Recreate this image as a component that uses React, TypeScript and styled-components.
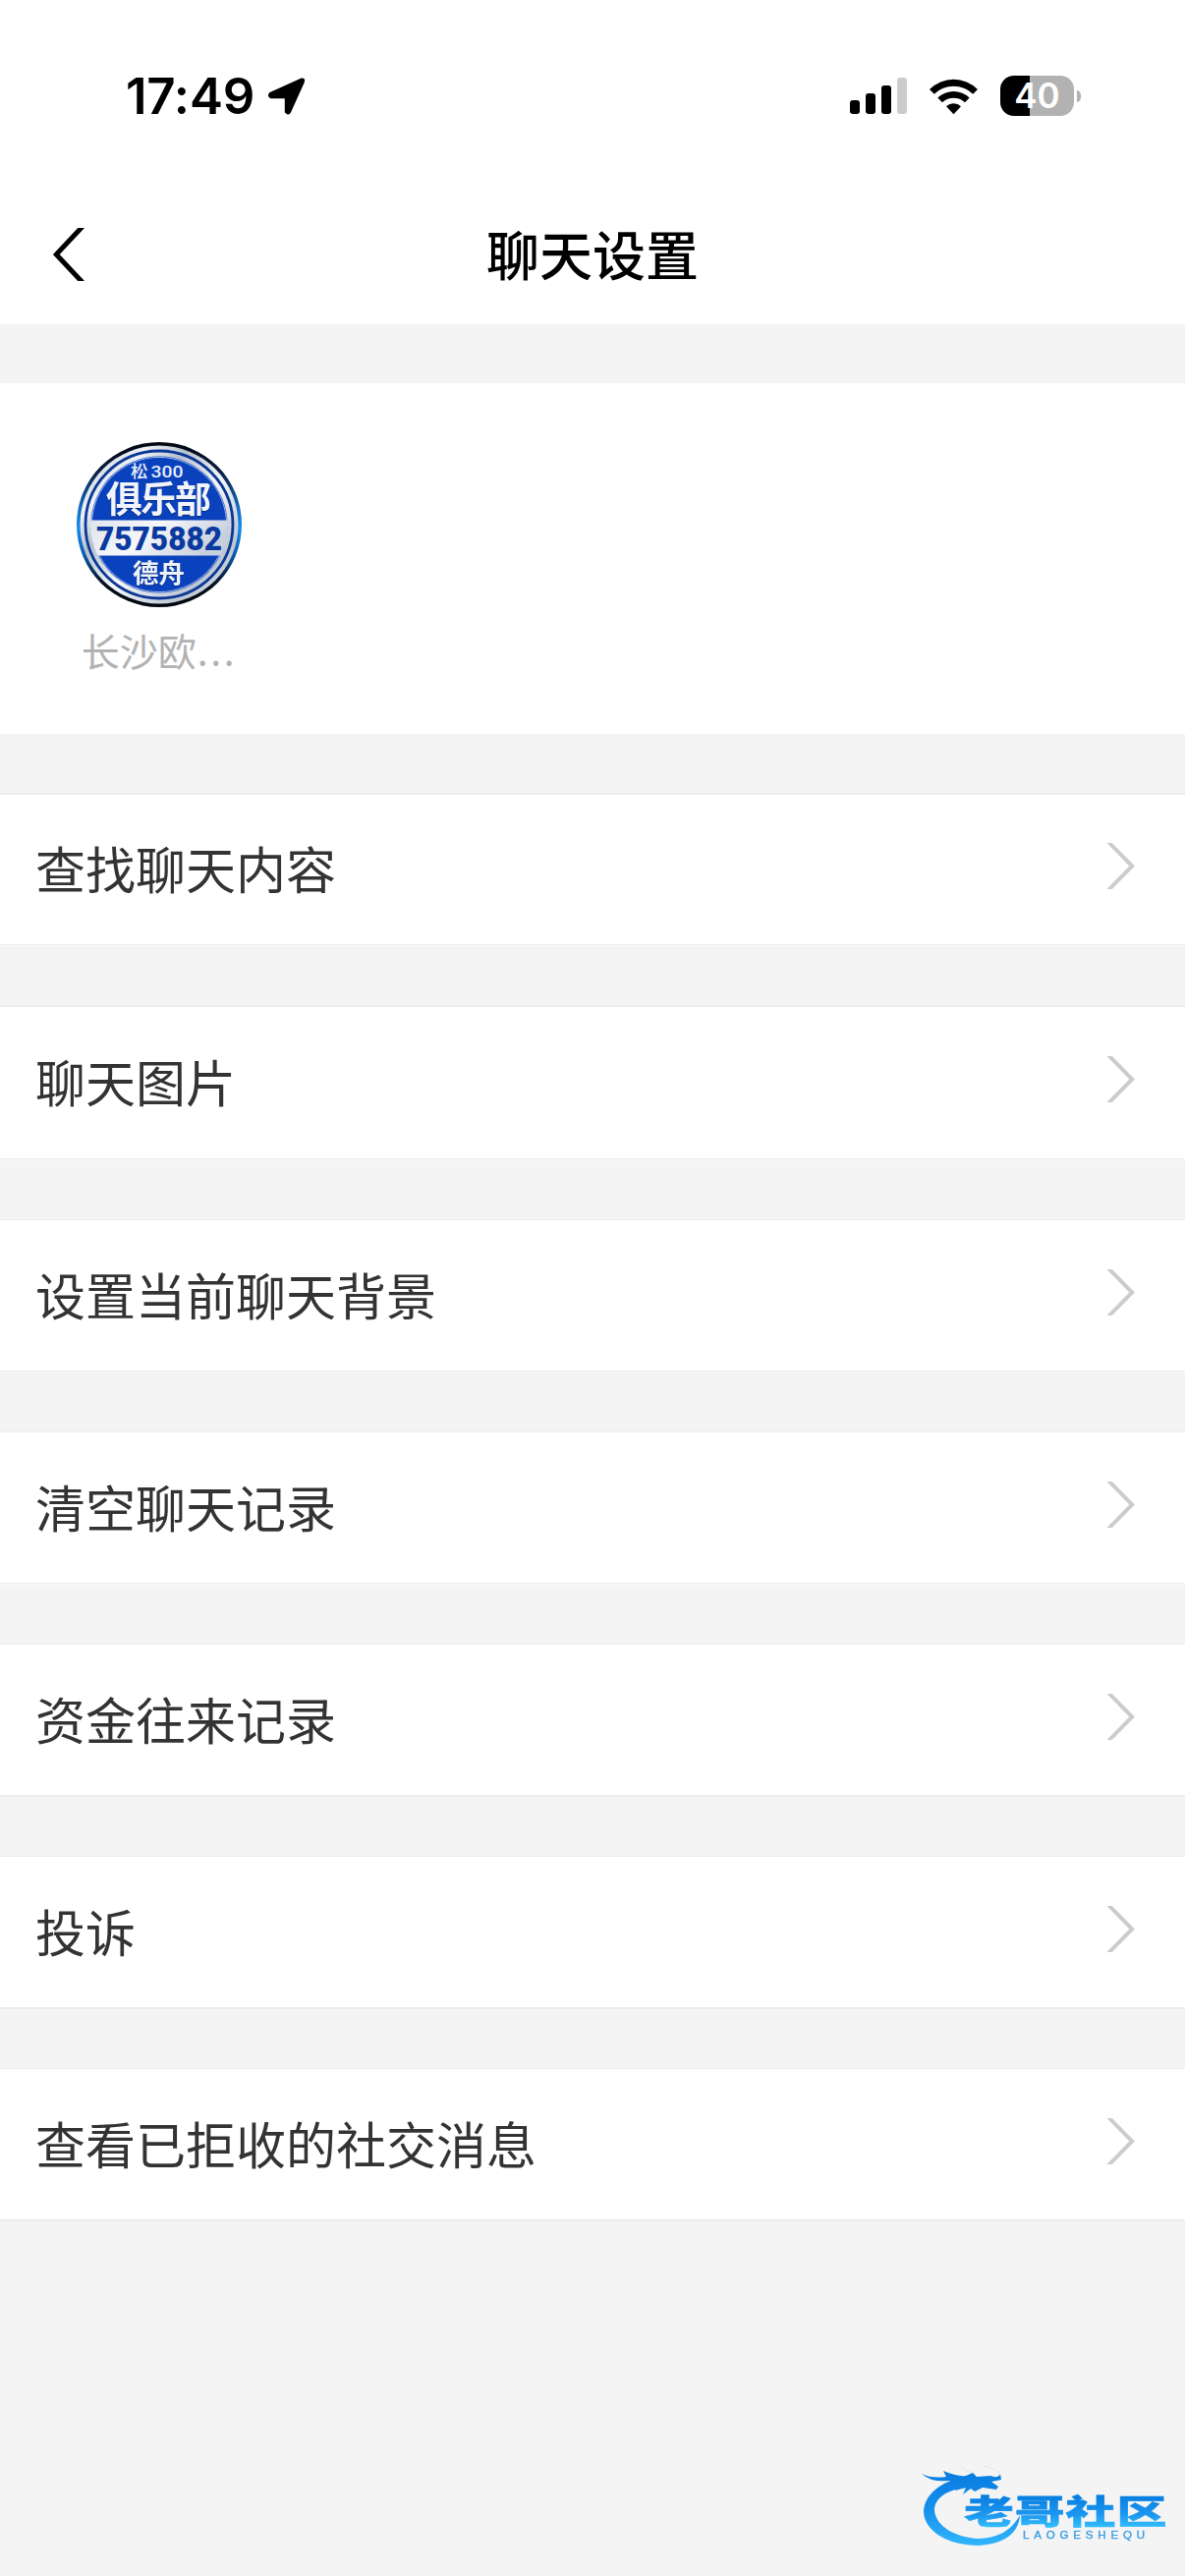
import React, { FC } from 'react';
import styled, { createGlobalStyle } from 'styled-components';

const GlobalStyle = createGlobalStyle`
  html,
  body {
    margin: 0;
    background: #f4f4f4;
  }
`;

const Screen = styled.div`
  position: relative;
  display: flex;
  flex-direction: column;
  width: 1206px;
  height: 2622px;
  overflow: hidden;
  background: #f4f4f4;
  font-family: 'Noto Sans CJK SC', sans-serif;
`;

const StatusBar = styled.div`
  display: flex;
  align-items: center;
  box-sizing: border-box;
  height: 195px;
  padding: 0 106px 0 128px;
  background: #fff;
`;

const Time = styled.span`
  width: 144px;
  font-family: Inter, sans-serif;
  font-size: 51px;
  font-weight: 600;
  letter-spacing: -0.2px;
  line-height: 60px;
`;

const StatusIcons = styled.div`
  display: flex;
  align-items: center;
  margin-left: auto;
`;

const SignalIcon = styled.svg`
  margin-right: 22px;
`;

const WifiSvg = styled.svg`
  margin-right: 22px;
`;

const Battery = styled.div`
  display: flex;
  align-items: center;
  justify-content: center;
  width: 75px;
  height: 41px;
  border-radius: 14px;
  background: linear-gradient(to right, #000 40%, #b2b2b2 40%);
  color: #fff;
  font-family: Inter, sans-serif;
  font-size: 35px;
  font-weight: 600;
  line-height: 41px;
`;

const BatteryCap = styled.div`
  width: 4px;
  height: 12px;
  margin-left: 3px;
  border-radius: 0 5px 5px 0 / 0 6px 6px 0;
  background: #b2b2b2;
`;

const NavBar = styled.header`
  display: grid;
  grid-template-columns: 100px 1fr 100px;
  align-items: center;
  height: 135px;
  background: #fff;
`;

const BackIcon = styled.svg`
  margin: -8px 0 0 53px;
`;

const Title = styled.h1`
  margin: -9px 0 0;
  color: #000;
  font-size: 54px;
  font-weight: 500;
  line-height: 80px;
  text-align: center;
`;

const Sections = styled.main`
  display: flex;
  flex-direction: column;
  gap: 60px;
  padding-top: 60px;
`;

const Members = styled.section`
  box-sizing: border-box;
  height: 357px;
  padding: 60px 78px 0;
  background: #fff;
`;

const Member = styled.div`
  display: flex;
  flex-direction: column;
  align-items: center;
  width: 168px;
`;

const MemberName = styled.span`
  margin-top: 14px;
  color: #b2b2b2;
  font-size: 39px;
  font-weight: 400;
  line-height: 58px;
`;

const Dots = styled.span`
  margin-left: 1px;
  letter-spacing: 2.6px;
`;

type RowProps = { $top: number; $bottom: number; $tall?: boolean };

const Row = styled.div<RowProps>`
  display: flex;
  align-items: center;
  justify-content: space-between;
  box-sizing: border-box;
  height: ${({ $tall }) => ($tall ? 158 : 156)}px;
  padding: 0 51px 0 36px;
  background: #fff;
  box-shadow:
    inset 0 ${({ $top }) => $top}px #ececec,
    inset 0 -${({ $bottom }) => ($bottom === 2 ? 0 : 1)}px #fafafa,
    inset 0 -2px #ececec;
`;

const RowLabel = styled.span`
  margin-top: -4px;
  color: #333;
  font-size: 51px;
  font-weight: 400;
  line-height: 76px;
`;

const Chevron = styled.svg`
  margin-top: -7px;
`;

const Watermark = styled.svg`
  position: absolute;
  left: 930px;
  top: 2500px;
  filter: blur(0.6px);
`;

const Embossed = styled.text`
  filter: drop-shadow(0.5px 1.5px 0.6px #06287d);
`;

const rows = [
  { label: '查找聊天内容', top: 2, bottom: 1 },
  { label: '聊天图片', top: 2, bottom: 1, tall: true },
  { label: '设置当前聊天背景', top: 1, bottom: 1 },
  { label: '清空聊天记录', top: 1, bottom: 1 },
  { label: '资金往来记录', top: 1, bottom: 2 },
  { label: '投诉', top: 1, bottom: 2 },
  { label: '查看已拒收的社交消息', top: 1, bottom: 2 },
];

const LocationIcon: FC = () => (
  <svg width="40" height="40" viewBox="0 0 40 40">
    <path
      d="M3 17 L34 2.8 Q38.2 1.3 36.8 5.6 L22.8 36.5 Q20.8 38.6 18.8 36 V21.2 H3.6 Q0.7 19.4 3 17 Z"
      stroke="#000"
      strokeWidth="2"
      strokeLinejoin="round"
    />
  </svg>
);

const WifiIcon: FC = () => (
  <WifiSvg width="51" height="38" viewBox="0 0 51 38">
    <path d="M1 12 A34.5 34.5 0 0 1 50 12 L45.2 16.7 A28.5 28.5 0 0 0 5.8 16.7 Z" />
    <path d="M9.3 20.5 A23.5 23.5 0 0 1 41.7 20.5 L37 25.2 A17 17 0 0 0 14 25.2 Z" />
    <path d="M18 29.3 A11 11 0 0 1 33 29.3 L25.5 37.2 Z" />
  </WifiSvg>
);

const Avatar: FC = () => (
  <svg width="168" height="168" viewBox="0 0 168 168" fontFamily="'Noto Sans CJK SC', sans-serif">
    <defs>
      <linearGradient id="rim" x1="0" y1="0" x2="0" y2="1">
        <stop offset="0" stopColor="#02060f" />
        <stop offset="0.17" stopColor="#0b1c3c" />
        <stop offset="0.38" stopColor="#1166b8" />
        <stop offset="0.52" stopColor="#128cee" />
        <stop offset="0.68" stopColor="#0b5bb0" />
        <stop offset="0.86" stopColor="#04101f" />
        <stop offset="1" stopColor="#02060d" />
      </linearGradient>
      <linearGradient id="silver" x1="0" y1="0" x2="1" y2="1">
        <stop offset="0" stopColor="#b6c1d0" />
        <stop offset="0.22" stopColor="#eff2f7" />
        <stop offset="0.35" stopColor="#b5c0ce" />
        <stop offset="0.55" stopColor="#f6f8fb" />
        <stop offset="0.8" stopColor="#bcc6d3" />
        <stop offset="1" stopColor="#e9ecf1" />
      </linearGradient>
      <linearGradient id="band" x1="0" y1="0" x2="1" y2="0.3">
        <stop offset="0" stopColor="#dfe4ec" />
        <stop offset="0.5" stopColor="#f5f7fa" />
        <stop offset="1" stopColor="#c8d0dd" />
      </linearGradient>
      <clipPath id="disc">
        <circle cx="84" cy="84" r="70" />
      </clipPath>
    </defs>
    <circle cx="84" cy="84" r="84" fill="url(#rim)" />
    <circle cx="84" cy="84" r="80.5" fill="url(#silver)" />
    <circle cx="84" cy="84" r="75" fill="none" stroke="#0b3795" strokeWidth="2.8" />
    <circle cx="84" cy="84" r="69.5" fill="#0a41bd" />
    <circle cx="84" cy="84" r="68.6" fill="none" stroke="#c9d6ec" strokeWidth="0.8" />
    <rect x="12" y="79.5" width="144" height="36" fill="url(#band)" clipPath="url(#disc)" />
    <text x="55" y="36" fontSize="17.5" fontWeight="500" fill="#e8eefb">松</text>
    <text
      x="75.5"
      y="36"
      fontSize="17"
      fontWeight="500"
      fontFamily="Roboto, sans-serif"
      textLength="33"
      lengthAdjust="spacingAndGlyphs"
      fill="#e8eefb"
    >
      300
    </text>
    <Embossed x="30" y="72" fontSize="37" fontWeight="700" textLength="107" fill="#f1f4fa">俱乐部</Embossed>
    <text
      x="20"
      y="109.5"
      fontSize="33"
      fontWeight="900"
      fontFamily="Roboto, sans-serif"
      textLength="128"
      lengthAdjust="spacingAndGlyphs"
      fill="#0a3aa0"
    >
      7575882
    </text>
    <Embossed x="57" y="142.5" fontSize="26.5" fontWeight="700" textLength="53" fill="#eef2f9">德舟</Embossed>
  </svg>
);

const CommunityLogo: FC = () => (
  <Watermark width="270" height="100" viewBox="0 0 270 100">
    <defs>
      <linearGradient id="ring" gradientUnits="userSpaceOnUse" x1="0" y1="18" x2="0" y2="90">
        <stop offset="0" stopColor="#0a7ee2" />
        <stop offset="0.5" stopColor="#1590ec" />
        <stop offset="1" stopColor="#31b4fb" />
      </linearGradient>
      <linearGradient id="word" gradientUnits="userSpaceOnUse" x1="0" y1="-30" x2="0" y2="3">
        <stop offset="0" stopColor="#0a7fe2" />
        <stop offset="0.6" stopColor="#1c97f0" />
        <stop offset="1" stopColor="#33bcfb" />
      </linearGradient>
    </defs>
    <path
      d="M48 22 C25 27 10 41 10 57 C11 77 36 91 66 91 C89 90 107 80 108 60 C98 78 82 84 66 84 C42 83 22 71 21 55 C21 43 33 34 54 32 Z"
      fill="url(#ring)"
    />
    <path
      d="M8 18 Q18 23 33 21 L30 15 Q44 21 53 20 L60 17 L64 21 L78 20 Q86 23 88 18 L89 24 L79 26 L86 31 L84 34 L70 32 L62 36 L58 33 L50 39 L53 32 L42 35 L46 28 L36 25 Q18 27 8 18 Z"
      fill="url(#ring)"
    />
    <path d="M48 11 Q54 17 62 17 M70 10 Q87 13 88 20" fill="none" stroke="#cfe4f5" strokeWidth="0.7" />
    <g transform="translate(51 69) scale(1.34 0.9)">
      <text
        fontFamily="'Noto Sans CJK SC', sans-serif"
        fontSize="38"
        fontWeight="900"
        textLength="154"
        fill="url(#word)"
        stroke="url(#word)"
        strokeWidth="0.6"
      >
        老哥社区
      </text>
    </g>
    <text x="111" y="83.5" fontFamily="'Liberation Sans', sans-serif" fontSize="11.5" textLength="124" fill="#3b9fe4" stroke="#3b9fe4" strokeWidth="0.4">
      LAOGESHEQU
    </text>
  </Watermark>
);

const App: FC = () => (
  <>
    <GlobalStyle />
    <Screen>
      <StatusBar>
        <Time>17:49</Time>
        <LocationIcon />
        <StatusIcons>
          <SignalIcon width="58" height="38" viewBox="0 0 58 38">
            <rect y="23" width="10" height="14" rx="3" />
            <rect x="16" y="16" width="10" height="21" rx="3" />
            <rect x="32" y="8" width="10" height="29" rx="3" />
            <rect x="48" width="10" height="37" rx="3" fill="#ccc" />
          </SignalIcon>
          <WifiIcon />
          <Battery>40</Battery>
          <BatteryCap />
        </StatusIcons>
      </StatusBar>
      <NavBar>
        <BackIcon width="34" height="54" viewBox="0 0 34 54">
          <path d="M31 -2 L3.8 27 L31 56" transform="translate(0.5 0)" fill="none" stroke="#000" strokeWidth="5" />
        </BackIcon>
        <Title>聊天设置</Title>
      </NavBar>
      <Sections>
        <Members>
          <Member>
            <Avatar />
            <MemberName>
              长沙欧
              <Dots>...</Dots>
            </MemberName>
          </Member>
        </Members>
        {rows.map(({ label, top, bottom, tall }) => (
          <Row key={label} $top={top} $bottom={bottom} $tall={tall}>
            <RowLabel>{label}</RowLabel>
            <Chevron width="28" height="47" viewBox="0 0 28 47">
              <path d="M0.5 -1.5 L25.2 23.5 L0.5 48.5" fill="none" stroke="#ccc" strokeWidth="4" />
            </Chevron>
          </Row>
        ))}
      </Sections>
      <CommunityLogo />
    </Screen>
  </>
);

export default App;
